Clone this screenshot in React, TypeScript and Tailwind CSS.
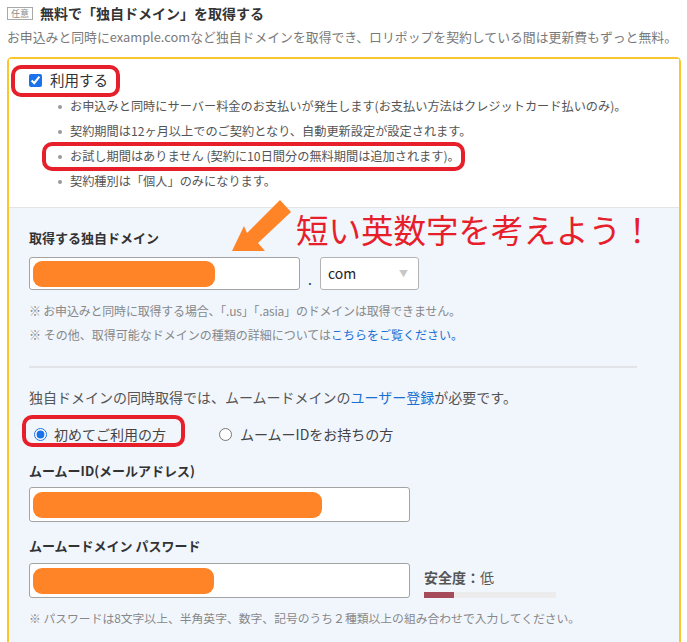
const FONT = "font-['Noto_Sans_CJK_JP','Noto_Sans',sans-serif]";

function Field({ box, bar }: { box: string; bar: string }) {
  return (
    <div className={`${box} flex items-center rounded-[3px] border border-[#a3a3a3] bg-white px-[3px]`}>
      <div className={`${bar} h-[26px] rounded-[9px] bg-[#ff8327]`} />
    </div>
  );
}

const LIST = [
  "お申込みと同時にサーバー料金のお支払いが発生します(お支払い方法はクレジットカード払いのみ)。",
  "契約期間は12ヶ月以上でのご契約となり、自動更新設定が設定されます。",
  "お試し期間はありません (契約に10日間分の無料期間は追加されます)。",
  "契約種別は「個人」のみになります。",
];

export default function App() {
  return (
    <div className={`${FONT} relative h-[642px] w-[687px] overflow-hidden bg-white`}>
      {/* heading */}
      <div className="flex h-[26px] items-center pl-[7px]">
        <span className="flex h-[13px] w-[26px] items-center justify-center border border-[#a8a8a8] text-[9px] leading-none text-[#8a8a8a]">
          任意
        </span>
        <span className="ml-[7px] text-[14px] font-bold text-[#333]">無料で「独自ドメイン」を取得する</span>
      </div>
      <p className="h-[22px] pl-[7px] text-[12.85px] leading-[22px] text-[#7a7a7a]">
        お申込みと同時にexample.comなど独自ドメインを取得でき、ロリポップを契約している間は更新費もずっと無料。
      </p>

      {/* yellow box */}
      <div className="ml-[7px] mt-[9px] w-[674px] rounded-t-[5px] border-2 border-b-0 border-[#fbc62c]">
        <div className="border-b border-[#e4e4e4] bg-white pb-[13px] pt-[10px]">
          <label className="flex h-[22px] items-center pl-[20px]">
            <input type="checkbox" checked readOnly className="h-[13px] w-[13px] accent-[#1a73e8]" />
            <span className="ml-[8px] text-[14.5px] text-[#333]">利用する</span>
          </label>
          <ul className="mt-[3px]">
            {LIST.map((t) => (
              <li key={t} className="flex h-[25px] items-center pl-[49px] text-[12.2px] text-[#555]">
                <span className="h-[4px] w-[4px] rounded-full bg-[#9a9a9a]" />
                <span className="ml-[8px]">{t}</span>
              </li>
            ))}
          </ul>
        </div>

        <div className="bg-[#f1f6fd] pl-[20px] pr-[42px] pt-[20px]">
          <p className="h-[20px] text-[13px] font-bold leading-[20px] text-[#333]">取得する独自ドメイン</p>
          <div className="mt-[9px] flex items-end">
            <Field box="h-[33px] w-[271px]" bar="w-[182px]" />
            <span className="w-[20px] pb-[4px] text-center text-[14px] leading-none text-[#333]">.</span>
            <div className="flex h-[33px] w-[99px] items-center rounded-[3px] border border-[#b3b3b3] bg-white pl-[7px] text-[14px] text-[#222]">
              com
              <span className="ml-auto mr-[10px] text-[9px] text-[#c8c8c8]">▼</span>
            </div>
          </div>
          <p className="mt-[9px] h-[24px] text-[12px] leading-[24px] tracking-[-0.2px] text-[#888]">
            ※ お申込みと同時に取得する場合、「.us」「.asia」のドメインは取得できません。
          </p>
          <p className="h-[24px] text-[12px] leading-[24px] text-[#888]">
            ※ その他、取得可能なドメインの種類の詳細については
            <span className="text-[#1a6fd3]">こちらをご覧ください。</span>
          </p>
          <div className="mt-[19px] h-[2px] bg-[#e2e4e8]" />
          <p className="mt-[18px] h-[22px] text-[14px] leading-[22px] text-[#555]">
            独自ドメインの同時取得では、ムームードメインの<span className="text-[#1a6fd3]">ユーザー登録</span>が必要です。
          </p>
          <div className="mt-[14px] flex h-[24px] items-center text-[14px] text-[#444]">
            <label className="flex w-[190px] items-center pl-[5px]">
              <input type="radio" name="who" checked readOnly className="h-[13px] w-[13px] accent-[#1a73e8]" />
              <span className="ml-[7px]">初めてご利用の方</span>
            </label>
            <label className="flex items-center">
              <input type="radio" name="who" readOnly className="h-[13px] w-[13px]" />
              <span className="ml-[8px]">ムームーIDをお持ちの方</span>
            </label>
          </div>
          <p className="mt-[15px] h-[20px] text-[13px] font-bold leading-[20px] text-[#333]">ムームーID(メールアドレス)</p>
          <div className="mt-[6px]">
            <Field box="h-[35px] w-[381px]" bar="w-[289px]" />
          </div>
          <p className="mt-[14px] h-[20px] text-[13px] font-bold leading-[20px] text-[#333]">ムームードメイン パスワード</p>
          <div className="mt-[7px] flex items-start">
            <Field box="h-[35px] w-[381px]" bar="w-[181px]" />
            <div className="ml-[14px] pt-[4px]">
              <p className="h-[20px] text-[14px] leading-[20px] text-[#555]">
                <span className="font-semibold">安全度：</span>低
              </p>
              <div className="mt-[5px] flex h-[6px] w-[132px] bg-[#ececec]">
                <div className="w-[30px] bg-[#a64b59]" />
              </div>
            </div>
          </div>
          <p className="mt-[10px] h-[20px] text-[11.8px] leading-[20px] text-[#888]">
            ※ パスワードは8文字以上、半角英字、数字、記号のうち２種類以上の組み合わせで入力してください。
          </p>
          <div className="mt-[14px] h-[2px] bg-[#e2e4e8]" />
          <div className="h-[20px]" />
        </div>
      </div>

      {/* annotations */}
      <div className="pointer-events-none absolute left-[11px] top-[65px] h-[32px] w-[109px] rounded-[10px] border-4 border-[#e61f2b]" />
      <div className="pointer-events-none absolute left-[42px] top-[142px] h-[29px] w-[423px] rounded-[10px] border-4 border-[#e61f2b]" />
      <div className="pointer-events-none absolute left-[22px] top-[415px] h-[32px] w-[163px] rounded-[10px] border-4 border-[#e61f2b]" />
      <p className="pointer-events-none absolute left-[296px] top-[207px] text-[32.5px] leading-[44px] text-[#e61f2b]">
        短い英数字を考えよう！
      </p>
      <svg className="pointer-events-none absolute left-0 top-0" width="687" height="642" viewBox="0 0 687 642">
        <polygon
          points="232,251 265,251 258,243 291,212 280,200 247,233 244,226"
          fill="#ff8327"
        />
      </svg>
    </div>
  );
}
